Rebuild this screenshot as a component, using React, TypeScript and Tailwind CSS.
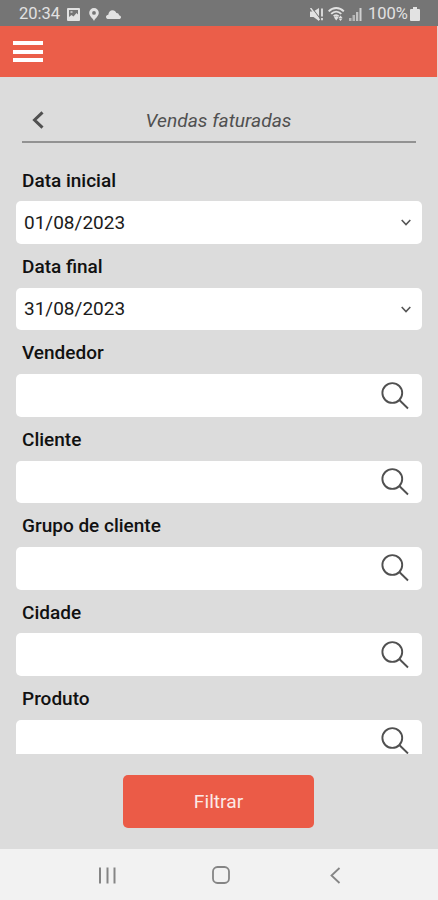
import { useState } from 'react'

type DateField = { label: string; value: string }

const DATE_FIELDS: DateField[] = [
  { label: 'Data inicial', value: '01/08/2023' },
  { label: 'Data final', value: '31/08/2023' },
]

const SEARCH_FIELDS = ['Vendedor', 'Cliente', 'Grupo de cliente', 'Cidade', 'Produto']

/* ── Status bar ───────────────────────────────────── */
function StatusBar() {
  return (
    <div className="h-[26px] shrink-0 bg-[#757575] text-[#e2e2e2] flex items-center justify-between pt-[2px] pl-[19px] pr-[18px]">
      <div className="flex items-center">
        <span className="text-[16.5px] leading-none w-[40px] whitespace-nowrap">20:34</span>
        <svg className="ml-[8px]" width="13" height="13" viewBox="0 0 13 13" fill="none">
          <rect width="13" height="13" rx="1" fill="currentColor" />
          <path fill="#757575" d="M2 2h9v4.500L9.500 5 6.500 8.500l-2-1.500L2 9Z" />
          <path stroke="currentColor" strokeWidth="1.300" d="M3.500 4h2" />
        </svg>
        <svg className="ml-[9px]" width="10" height="13" viewBox="0 0 10 13" fill="currentColor">
          <path fillRule="evenodd" d="M5 0a4.800 4.800 0 0 1 4.800 4.800C9.800 8 6.500 10 5 13 3.500 10 .2 8 .2 4.800A4.800 4.800 0 0 1 5 0Zm0 3a1.900 1.900 0 1 0 0 3.800A1.900 1.900 0 0 0 5 3Z" />
        </svg>
        <svg className="ml-[7px]" width="15" height="9" viewBox="0 0 15 9" fill="currentColor">
          <path d="M2.500 9C1 9 0 8.100 0 6.900c0-1.300 1-2.100 2.300-2.200C2.500 2.100 4.300.2 6.500.2c1.900 0 3.300 1.100 3.900 2.800C12.500 3 13 4.300 13 5.200c1.200.2 2 1 2 2S14.100 9 13 9Z" />
        </svg>
      </div>
      <div className="flex items-center">
        <svg width="14" height="13" viewBox="0 0 14 13" fill="none" stroke="currentColor">
          <path fill="currentColor" stroke="none" d="M0 3.500h3.500L9 0v13L3.500 9H0Z" />
          <path stroke="#757575" strokeWidth="1.100" d="M2 0l8 10.500" />
          <path strokeWidth="1.500" d="M.5 0l9 12" />
          <path strokeWidth="1.800" d="M12 .5v8M12 10v2.200" />
        </svg>
        <svg className="ml-[4px]" width="17" height="14" viewBox="0 0 17 14" fill="none" stroke="currentColor">
          <path strokeWidth="1.900" d="M.7 4.400C5-.2 11.500-.2 15.800 4.400M3.200 6.900c3-3 7-3 10.100 0M5.700 9.300c1.700-1.600 3.500-1.600 5 0" />
          <path fill="currentColor" stroke="none" d="M6 10.500 8.200 9 10.500 10.500l-2.300 3ZM12.500 8.500l2 2.500h-4ZM10.500 11.500h4l-2 2.500Z" />
        </svg>
        <svg className="ml-[4px]" width="13" height="13" viewBox="0 0 13 13" fill="currentColor">
          <path opacity=".6" d="M0 10h2.500v3H0zM3.500 7H6v6H3.500z" />
          <path opacity=".7" d="M7 4h2.300v9H7z" />
          <path opacity=".85" d="M10.500 0h2v13h-2z" />
        </svg>
        <span className="ml-[6px] w-[39px] text-[16.5px] leading-none whitespace-nowrap">100%</span>
        <svg className="ml-[3px]" width="10" height="14" viewBox="0 0 10 14" fill="currentColor">
          <path d="M3 0h4v2h2a1 1 0 0 1 1 1v10a1 1 0 0 1-1 1H1a1 1 0 0 1-1-1V3a1 1 0 0 1 1-1h2Z" />
        </svg>
      </div>
    </div>
  )
}

/* ── Form pieces ──────────────────────────────────── */
function FieldLabel({ children }: { children: string }) {
  return (
    <p className="h-[43.8px] pt-[12px] pl-[6px] text-[19px] leading-[22px] font-medium text-[#111]">
      {children}
    </p>
  )
}

function SearchIcon() {
  return (
    <svg width="28" height="28" viewBox="0 0 28 28" fill="none" stroke="#505050" strokeWidth="1.900">
      <circle cx="11.300" cy="11" r="9.900" />
      <path d="M18.300 18 27 26.500" />
    </svg>
  )
}

export default function App() {
  const [filters, setFilters] = useState<Record<string, string>>({})

  return (
    <div className="h-[900px] w-[438px] flex flex-col overflow-hidden bg-[#dcdcdc] font-['Roboto',sans-serif]">
      <StatusBar />

      <header className="h-[51px] shrink-0 bg-[#eb5e49] pl-[13px] flex items-center border-r border-[#e9cfca]">
        <button type="button" aria-label="Menu" className="flex flex-col gap-[4.500px]">
          <span className="w-[30px] h-[4px] bg-white" />
          <span className="w-[30px] h-[4px] bg-white" />
          <span className="w-[30px] h-[4px] bg-white" />
        </button>
      </header>

      {/* Page title */}
      <div className="mx-[22px] mt-[22px] h-[44px] shrink-0 border-b-2 border-[#929292] flex items-center">
        <svg className="ml-[10px]" width="12" height="18" viewBox="0 0 12 18" fill="none" stroke="#505050" strokeWidth="3">
          <path d="M10.500 1.300 2.500 9l8 7.700" />
        </svg>
        <h1 className="flex-1 pt-[3px] pr-[23px] text-center text-[19.200px] italic text-[#505050]">Vendas faturadas</h1>
      </div>

      {/* Filters */}
      <div className="h-[611px] shrink-0 overflow-hidden px-[16px] pt-[14.700px]">
        {DATE_FIELDS.map(field => (
          <div key={field.label}>
            <FieldLabel>{field.label}</FieldLabel>
            <div className="h-[42.600px] rounded-[5px] bg-white pl-[8px] pr-[11px] flex items-center justify-between">
              <span className="pt-px text-[19px] text-[#1b1b1b]">{field.value}</span>
              <svg width="10" height="7" viewBox="0 0 10 7" fill="none" stroke="#555" strokeWidth="1.600">
                <path d="M.7 1 5 5.500 9.300 1" />
              </svg>
            </div>
          </div>
        ))}
        {SEARCH_FIELDS.map(label => (
          <div key={label}>
            <FieldLabel>{label}</FieldLabel>
            <div className="h-[42.600px] rounded-[5px] bg-white pl-[8px] pr-[13px] flex items-center">
              <input
                aria-label={label}
                className="flex-1 min-w-0 text-[19px] outline-none"
                value={filters[label] ?? ''}
                onChange={e => setFilters({ ...filters, [label]: e.target.value })}
              />
              <SearchIcon />
            </div>
          </div>
        ))}
      </div>

      <div className="flex-1 flex justify-center items-start pt-[21px] pr-px">
        <button type="button" className="w-[191px] h-[53px] rounded-[5px] bg-[#eb5b47] pt-px text-[19.200px] text-[#fbe9e6]">
          Filtrar
        </button>
      </div>

      {/* System navigation */}
      <nav className="h-[51px] shrink-0 bg-[#f2f2f2] flex items-center pt-px pl-[99px] text-[#858585]">
        <svg width="17" height="17" viewBox="0 0 17 17" fill="none" stroke="currentColor" strokeWidth="2">
          <path d="M1 .5v16M8.500.5v16M15.500.5v16" />
        </svg>
        <svg className="ml-[96px]" width="18" height="18" viewBox="0 0 18 18" fill="none" stroke="currentColor" strokeWidth="1.800">
          <rect x="1" y="1" width="16" height="16" rx="4.500" />
        </svg>
        <svg className="ml-[100px]" width="11" height="17" viewBox="0 0 11 17" fill="none" stroke="currentColor" strokeWidth="1.800">
          <path d="M9.500 1 1.500 8.500l8 7.500" />
        </svg>
      </nav>
    </div>
  )
}
